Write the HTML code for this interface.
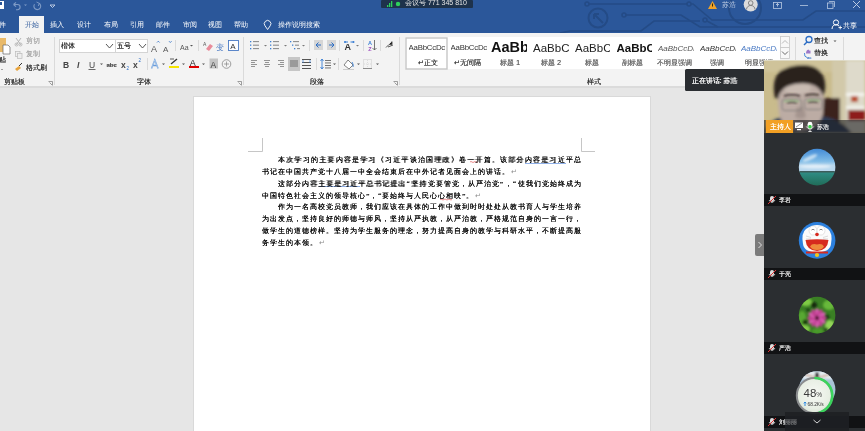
<!DOCTYPE html>
<html><head><meta charset="utf-8">
<style>
*{margin:0;padding:0;box-sizing:border-box}
html,body{width:865px;height:431px;overflow:hidden;background:#e6e6e6;will-change:transform;font-family:"Liberation Sans",sans-serif;position:relative}
.a{position:absolute}
svg{position:absolute;left:0;top:0}
#title{left:0;top:0;width:865px;height:33px;background:#2b579a}
#ribbon{left:0;top:33px;width:865px;height:55px;background:#f3f3f3;border-bottom:2px solid #dbdbdb}
#page{left:194px;top:97px;width:456px;height:334px;background:#fff;box-shadow:0 0 0 1px #d9d9d9}
.t{position:absolute;font-size:7px;line-height:8px;white-space:nowrap;text-shadow:0.25px 0 0 currentColor}
.ns{text-shadow:none!important}
.tab{position:absolute;top:20px;font-size:7px;color:#fff;line-height:9px;white-space:nowrap}
.lbl{position:absolute;font-size:7px;color:#333;line-height:8px;white-space:nowrap;text-shadow:0.25px 0 0 currentColor}
.sep{position:absolute;width:1px;background:#dadada}
#doc{left:262px;top:155px;width:319px;font-size:7px;line-height:11.86px;text-shadow:0.4px 0 0 rgba(0,0,0,.8),0 0.25px 0 rgba(0,0,0,.4);color:#000;font-family:"Liberation Serif",serif}
#doc div{white-space:nowrap;height:11.86px;text-align:justify;text-align-last:justify}
#doc div.l{text-align-last:left;letter-spacing:1px}
#doc .rt{color:#8a8a8a;text-shadow:none;padding-left:1px}
#doc q{quotes:none;display:inline-block;width:4px;overflow:visible;text-align:center;letter-spacing:0}
#panel{left:764px;top:133px;width:101px;height:298px;background:#2c2e32}
.bar{position:absolute;left:0;width:101px;height:12px;background:#131416}
.nm{position:absolute;left:15px;top:2px;font-size:7px;color:#eee;line-height:8px}
.av{position:absolute;left:34px;width:38px;height:38px;border-radius:50%;overflow:hidden}
</style></head><body>
<div id="title" class="a">
  <svg width="865" height="33" viewBox="0 0 865 33">
    <g fill="none" stroke="#244b86" stroke-width="1.6">
      <path d="M589,4 H687 M691,4 H693 L712,20 H803 L816,11 H865"/>
      <circle cx="587" cy="4" r="2"/><circle cx="689" cy="4" r="2"/>
      <circle cx="598" cy="18" r="9.5" stroke-width="2"/>
      <path d="M594,14 L603,23 M594,14 H599 M594,14 V19" stroke-width="2"/>
      <path d="M626,15 H681 L700,27 H865"/>
      <circle cx="624" cy="15" r="2"/>
      <path d="M560,33 L570,31 H641 L654,21 H700 M707,21 L718,27"/>
      <circle cx="705" cy="20" r="2"/>
      <circle cx="745" cy="8" r="16" stroke-width="2"/>
    </g>
    <!-- save icon -->
    <rect x="-3" y="1" width="7" height="8" fill="#fff"/>
    <rect x="-2" y="2" width="4" height="3" fill="#2b579a"/>
    <!-- undo -->
    <path d="M14,4.5 H17.5 A2.6,2.6 0 0 1 17.5,9.7 H16" fill="none" stroke="#7f9bc6" stroke-width="1.1"/>
    <path d="M13.5,4.5 L16,2.3 M13.5,4.5 L16,6.7" stroke="#7f9bc6" stroke-width="1.1" fill="none"/>
    <path d="M24,4.5 L27,4.5 L25.5,6 Z" fill="#7f9bc6"/>
    <path d="M39,3.3 A3.4,3.4 0 1 1 34.5,4.3" fill="none" stroke="#7f9bc6" stroke-width="1.1"/>
    <path d="M36.5,2 L39.3,3.3 L38.3,6" fill="none" stroke="#7f9bc6" stroke-width="0.9"/>
    <path d="M50,5 H55 L52.5,7.5 Z" fill="none" stroke="#c8d4e8" stroke-width="0.9"/>
    <!-- lightbulb -->
    <path d="M267.6,29.5 L265,25.8 A3.3,3.3 0 1 1 270.2,25.8 Z" fill="none" stroke="#fff" stroke-width="0.9" stroke-linejoin="round"/>
    <!-- meeting -->
    <rect x="381" y="0" width="92" height="8" rx="1" fill="#1b2530" opacity="0.75"/>
    <rect x="387" y="5" width="1.3" height="2" fill="#2ed05a"/>
    <rect x="389" y="3" width="1.3" height="4" fill="#2ed05a"/>
    <rect x="391" y="1" width="1.3" height="6" fill="#2ed05a"/>
    <circle cx="398" cy="4" r="2.2" fill="#2ed05a"/>
    <!-- warning -->
    <path d="M712.5,1 L717,9 H708 Z" fill="#f0a32a"/>
    <rect x="712" y="3.5" width="1" height="3" fill="#3a2a00"/>
    <!-- avatar -->
    <circle cx="750.7" cy="4.5" r="7" fill="#dcdcdc"/>
    <circle cx="750.7" cy="3" r="2.3" fill="none" stroke="#7a7a7a" stroke-width="0.9"/>
    <path d="M746.5,9.5 A4.2,4 0 0 1 755,9.5" fill="none" stroke="#7a7a7a" stroke-width="0.9"/>
    <!-- window controls -->
    <rect x="773.5" y="2.5" width="8" height="6" fill="none" stroke="#b9c9e2" stroke-width="0.8"/>
    <path d="M777.5,3.5 V6.5 M776,5 L777.5,3.5 L779,5" fill="none" stroke="#c9d6ea" stroke-width="0.8"/>
    <path d="M800,5.5 H808" stroke="#b9c9e2" stroke-width="0.8"/>
    <rect x="827.5" y="3" width="5.5" height="5.5" fill="none" stroke="#b9c9e2" stroke-width="0.8"/>
    <path d="M829,1.5 H834.5 V7" fill="none" stroke="#b9c9e2" stroke-width="0.8"/>
    <path d="M853,1 L860,8 M860,1 L853,8" stroke="#c9d6ea" stroke-width="0.9"/>
    <!-- share icon -->
    <circle cx="836" cy="22.5" r="2.6" fill="none" stroke="#fff" stroke-width="1"/>
    <path d="M832,29 A4,4 0 0 1 839,26" fill="none" stroke="#fff" stroke-width="1"/>
    <path d="M838.5,27.5 H842 M840.2,25.7 V29.3" stroke="#fff" stroke-width="0.9"/>
  </svg>
  <div class="a" style="left:19px;top:15.6px;width:25px;height:17.4px;background:#f3f3f3"></div>
  <div class="tab" style="left:-1px;">件</div>
  <div class="tab" style="left:24.5px;color:#2b579a">开始</div>
  <div class="tab" style="left:50px">插入</div>
  <div class="tab" style="left:77px">设计</div>
  <div class="tab" style="left:103.5px">布局</div>
  <div class="tab" style="left:130px">引用</div>
  <div class="tab" style="left:156px">邮件</div>
  <div class="tab" style="left:183px">审阅</div>
  <div class="tab" style="left:208px">视图</div>
  <div class="tab" style="left:234px">帮助</div>
  <div class="tab" style="left:278px">操作说明搜索</div>
  <div class="tab" style="left:405px;top:-2px;color:#e6e6e6">会议号 771 345 810</div>
  <div class="tab" style="left:722px;top:0px;color:#c6d2e6">苏浩</div>
  <div class="tab" style="left:843px;top:20.5px">共享</div>
</div>
<div id="ribbon" class="a"></div>
<div class="a" style="left:0;top:33px;width:865px;height:54px">
 <svg width="865" height="54" viewBox="0 33 865 54">
  <g fill="#dadada">
   <rect x="54" y="37" width="1" height="48"/><rect x="243" y="37" width="1" height="48"/>
   <rect x="399" y="37" width="1" height="48"/><rect x="795" y="37" width="1" height="48"/><rect x="843" y="37" width="1" height="48"/>
   <rect x="175" y="40" width="1" height="11"/><rect x="198" y="40" width="1" height="11"/>
   <rect x="147" y="58" width="1" height="12"/>
   <rect x="309" y="40" width="1" height="11"/><rect x="339" y="40" width="1" height="11"/>
   <rect x="363" y="40" width="1" height="11"/><rect x="380" y="40" width="1" height="11"/>
   <rect x="316" y="58" width="1" height="12"/><rect x="338" y="58" width="1" height="12"/>
  </g>
  <!-- clipboard: paste -->
  <rect x="-2" y="38" width="8" height="14" fill="#e8b969"/>
  <path d="M3,45 H8 L10,47 V54 H3 Z" fill="#fff" stroke="#666" stroke-width="0.7"/>
  <path d="M1,69 L3,69 L2,70 Z" fill="#555"/>
  <!-- cut -->
  <path d="M16,38 L21,45 M21,38 L16,45" stroke="#b0b0b0" stroke-width="0.9"/>
  <circle cx="16.5" cy="44.5" r="1.5" fill="none" stroke="#b0b0b0" stroke-width="0.8"/>
  <circle cx="20.5" cy="44.5" r="1.5" fill="none" stroke="#b0b0b0" stroke-width="0.8"/>
  <!-- copy -->
  <rect x="15.5" y="51.5" width="4.5" height="5" fill="#eee" stroke="#bbb" stroke-width="0.7"/>
  <rect x="17.5" y="53.5" width="4.5" height="5" fill="#eee" stroke="#bbb" stroke-width="0.7"/>
  <!-- format painter -->
  <path d="M15,69 L19,66 L21,68 L17,71 Z" fill="#e8a33b"/>
  <path d="M19,66 L22,63" stroke="#333" stroke-width="1"/>
  <!-- launchers -->
  <g fill="none" stroke="#777" stroke-width="0.7">
   <path d="M48.5,81.5 H52.5 V85.5 M49.5,82.5 L52,85"/>
   <path d="M237.5,81.5 H241.5 V85.5 M238.5,82.5 L241,85"/>
   <path d="M393.5,81.5 H397.5 V85.5 M394.5,82.5 L397,85"/>
  </g>
  <!-- font boxes -->
  <rect x="59.5" y="39.5" width="56" height="13" fill="#fff" stroke="#d4d4d4"/>
  <rect x="115.5" y="39.5" width="32" height="13" fill="#fff" stroke="#d4d4d4"/>
  <path d="M106,44 L109.5,48 L113,44" fill="none" stroke="#444" stroke-width="0.9"/>
  <path d="M139,44 L142.5,48 L146,44" fill="none" stroke="#444" stroke-width="0.9"/>
  <!-- grow/shrink -->
  <g fill="#555" font-size="8" font-family="Liberation Sans">
   <text x="151" y="51.5" font-size="9">A</text><text x="163" y="51.5" font-size="8">A</text>
   <text x="180" y="50" font-size="7">Aa</text>
  </g>
  <path d="M157,42.5 L158.3,41.2 L159.6,42.5" fill="none" stroke="#2b6cc4" stroke-width="0.8"/>
  <path d="M169,41.2 L170.3,42.5 L171.6,41.2" fill="none" stroke="#2b6cc4" stroke-width="0.8"/>
  <path d="M190,45 H193 L191.5,46.5 Z" fill="#555"/>
  <!-- clear format -->
  <text x="203" y="46" font-size="5" fill="#555" font-family="Liberation Sans">A</text>
  <path d="M206,49 L210,44 L213,46 L209,51 Z" fill="#e98b9a"/>
  <text x="216" y="50" font-size="8" fill="#4a7ac4" font-family="Liberation Serif">变</text>
  <rect x="228.5" y="40.5" width="10" height="10" fill="#fff" stroke="#4a7ac4" stroke-width="0.9"/>
  <text x="230.3" y="49" font-size="8" fill="#333" font-family="Liberation Sans">A</text>
  <!-- row2 font -->
  <g font-family="Liberation Sans" fill="#444">
   <text x="63" y="68" font-size="8.5" font-weight="bold">B</text>
   <text x="77" y="68" font-size="8.5" font-style="italic" font-weight="bold">I</text>
   <text x="89" y="67.5" font-size="8.5">U</text>
   <text x="106.5" y="67" font-size="6" font-weight="bold">abc</text>
   <text x="121" y="68" font-size="8.5" font-weight="bold">x</text>
   <text x="133" y="68" font-size="8.5" font-weight="bold">x</text>
  </g>
  <path d="M88.5,69.5 H95.5" stroke="#444" stroke-width="0.8"/>
  <path d="M106.5,65 H116.5" stroke="#444" stroke-width="0.6"/>
  <text x="126.5" y="69.5" font-size="4.5" fill="#2b6cc4" font-family="Liberation Sans">2</text>
  <text x="138.5" y="62" font-size="4.5" fill="#2b6cc4" font-family="Liberation Sans">2</text>
  <path d="M100,63.5 H103 L101.5,65 Z" fill="#555"/>
  <path d="M151.5,68.5 L154.8,60 L158.1,68.5 M152.8,65.5 H156.8" fill="none" stroke="#6a9ddb" stroke-width="1.4"/><path d="M151.5,68.5 L154.8,60 L158.1,68.5" fill="none" stroke="#e4eef9" stroke-width="0.45"/>
  <path d="M162,63.5 H165 L163.5,65 Z" fill="#555"/>
  <path d="M171,64 L177,59" stroke="#333" stroke-width="1.3"/>
  <path d="M170,59 H174" stroke="#333" stroke-width="0.8"/>
  <rect x="169" y="66" width="10" height="2" fill="#f5e400"/>
  <path d="M182,63.5 H185 L183.5,65 Z" fill="#555"/>
  <text x="189.8" y="65.5" font-size="9" fill="#222" font-family="Liberation Sans">A</text>
  <rect x="189" y="66" width="10" height="2" fill="#e00000"/>
  <path d="M202,63.5 H205 L203.5,65 Z" fill="#555"/>
  <rect x="209.5" y="58.5" width="8.5" height="10" fill="#c4c4c4"/>
  <text x="210.5" y="67.5" font-size="8.5" fill="#444" font-family="Liberation Sans">A</text>
  <circle cx="226.5" cy="64" r="4.3" fill="none" stroke="#888" stroke-width="0.8"/>
  <path d="M226.5,61.5 V66.5 M224,64 H229" stroke="#777" stroke-width="0.6"/>
  <!-- paragraph row1 -->
  <g fill="#3b7fd4">
   <rect x="250" y="41" width="1.3" height="1.3"/><rect x="250" y="44.5" width="1.3" height="1.3"/><rect x="250" y="48" width="1.3" height="1.3"/>
   <rect x="270" y="41" width="1.3" height="1.3"/><rect x="270" y="44.5" width="1.3" height="1.3"/><rect x="270" y="48" width="1.3" height="1.3"/>
   <rect x="290" y="41" width="1.3" height="1.3"/><rect x="292" y="44.5" width="1.3" height="1.3"/><rect x="294" y="48" width="1.3" height="1.3"/>
  </g>
  <g fill="#7a7a7a">
   <rect x="253" y="41.2" width="6" height="0.9"/><rect x="253" y="44.7" width="6" height="0.9"/><rect x="253" y="48.2" width="6" height="0.9"/>
   <rect x="273" y="41.2" width="6" height="0.9"/><rect x="273" y="44.7" width="6" height="0.9"/><rect x="273" y="48.2" width="6" height="0.9"/>
   <rect x="293" y="41.2" width="6" height="0.9"/><rect x="295" y="44.7" width="4" height="0.9"/><rect x="297" y="48.2" width="3" height="0.9"/>
   <path d="M264,45 H267 L265.5,46.5 Z"/><path d="M284,45 H287 L285.5,46.5 Z"/><path d="M302,45 H305 L303.5,46.5 Z"/>
   <path d="M356,45 H359 L357.5,46.5 Z"/>
  </g>
  <rect x="314" y="40" width="9" height="10" fill="#d6d6d6"/>
  <path d="M316,45 H321 M316,45 L318.5,42.5 M316,45 L318.5,47.5" stroke="#2b6cc4" stroke-width="1" fill="none"/>
  <rect x="327" y="40" width="9" height="10" fill="#d6d6d6"/>
  <path d="M329,45 H334 M334,45 L331.5,42.5 M334,45 L331.5,47.5" stroke="#2b6cc4" stroke-width="1" fill="none"/>
  <text x="344.5" y="50" font-size="9" fill="#333" font-weight="bold" font-family="Liberation Sans">A</text>
  <path d="M344.5,42 H348 M350.5,42 H354" stroke="#3b7fd4" stroke-width="1.1"/><circle cx="345" cy="42" r="1" fill="#3b7fd4"/><circle cx="353.5" cy="42" r="1" fill="#3b7fd4"/>
  <text x="368" y="45" font-size="5.5" fill="#3b7fd4" font-weight="bold" font-family="Liberation Sans">A</text>
  <text x="368.3" y="50.5" font-size="5.5" fill="#a050c0" font-weight="bold" font-family="Liberation Sans">Z</text>
  <path d="M374.5,40 V50 M372.5,48 L374.5,50 L376.5,48" stroke="#555" stroke-width="0.8" fill="none"/>
  <path d="M386,47.5 L389,44.5 M389,44.5 L392,44.5 L392,41.5 M388,47 L393,45" stroke="#555" stroke-width="1"/>
  <!-- paragraph row2 -->
  <g fill="#8a8a8a">
   <rect x="251" y="60" width="6" height="0.9"/><rect x="251" y="62" width="4" height="0.9"/><rect x="251" y="64" width="6" height="0.9"/><rect x="251" y="66" width="4" height="0.9"/>
   <rect x="264" y="60" width="6" height="0.9"/><rect x="265" y="62" width="4" height="0.9"/><rect x="264" y="64" width="6" height="0.9"/><rect x="265" y="66" width="4" height="0.9"/>
   <rect x="278" y="60" width="6" height="0.9"/><rect x="280" y="62" width="4" height="0.9"/><rect x="278" y="64" width="6" height="0.9"/><rect x="280" y="66" width="4" height="0.9"/>
  </g>
  <rect x="288" y="57" width="12" height="14" fill="#c6c6c6"/>
  <rect x="290" y="60" width="8" height="7" fill="#9a9a9a"/>
  <g fill="#555"><rect x="302" y="59" width="9" height="1"/><rect x="302" y="62" width="9" height="1"/><rect x="302" y="65" width="9" height="1"/><rect x="302" y="68" width="9" height="1"/></g>
  <path d="M303,60 V63 M310,60 V63" stroke="#3b7fd4" stroke-width="0.7"/>
  <path d="M322,59 V69 M320.5,61 L322,59 L323.5,61 M320.5,67 L322,69 L323.5,67" stroke="#3b7fd4" stroke-width="0.9" fill="none"/>
  <g fill="#666"><rect x="325" y="60" width="6" height="0.9"/><rect x="325" y="62.5" width="6" height="0.9"/><rect x="325" y="65" width="6" height="0.9"/><rect x="325" y="67.5" width="6" height="0.9"/></g>
  <path d="M333,63.5 H336 L334.5,65 Z" fill="#555"/>
  <path d="M344,65 L348,60 L353,65 L349,69 Z" fill="#fff" stroke="#666" stroke-width="0.8"/>
  <path d="M352,62 Q354,65 353,67" stroke="#3b7fd4" stroke-width="0.9" fill="none"/>
  <rect x="343" y="69" width="11" height="1" fill="#ccc"/>
  <path d="M357,63.5 H360 L358.5,65 Z" fill="#555"/>
  <rect x="363.5" y="59.5" width="8" height="9" fill="none" stroke="#bbb" stroke-width="0.7" stroke-dasharray="1 1"/><path d="M367.5,60 V68 M364,64 H371" stroke="#ccc" stroke-width="0.6" stroke-dasharray="1 1"/>
  <path d="M363,68.5 H372" stroke="#777" stroke-width="0.8"/>
  <path d="M376,63.5 H379 L377.5,65 Z" fill="#555"/>
  <!-- styles gallery -->
  <rect x="405" y="37" width="375" height="32" fill="#fff"/>
  <rect x="406" y="38" width="41" height="31" fill="none" stroke="#c6c6c6" stroke-width="1.4"/>
  <!-- gallery scroll -->
  <rect x="780.5" y="36.5" width="9" height="11" fill="#f8f8f8" stroke="#c8c8c8" stroke-width="0.8"/>
  <rect x="780.5" y="47.5" width="9" height="11" fill="#f8f8f8" stroke="#c8c8c8" stroke-width="0.8"/>
  <path d="M782,43.5 L785,40.5 L788,43.5" fill="none" stroke="#aaa" stroke-width="0.8"/>
  <path d="M782,51.5 L785,54.5 L788,51.5" fill="none" stroke="#444" stroke-width="0.8"/>
  <!-- find/replace -->
  <circle cx="809" cy="39.5" r="3" fill="none" stroke="#2b6cc4" stroke-width="1.3"/>
  <path d="M807,42 L804,45" stroke="#2b6cc4" stroke-width="1.5"/>
  <path d="M833.5,40.5 H836.5 L835,42 Z" fill="#555"/>
  <path d="M806,53.5 Q806,50 808.5,49.5 Q809,51 810.5,50.5 L810.5,53.5 Z" fill="#9b78c8"/>
  <path d="M804.5,53 Q804,57 807,57.5" stroke="#3b7fd4" stroke-width="0.9" fill="none"/>
  <text x="807" y="58.5" font-size="4" fill="#2b6cc4" font-family="Liberation Sans" font-weight="bold">ac</text>
 </svg>
</div>
<!-- ribbon text -->
<div class="t" style="left:-1px;top:56px;color:#333">贴</div>
<div class="t" style="left:26px;top:37px;color:#aaa">剪切</div>
<div class="t" style="left:26px;top:50px;color:#aaa">复制</div>
<div class="t" style="left:26px;top:63.5px;color:#333">格式刷</div>
<div class="lbl" style="left:3.5px;top:77.5px">剪贴板</div>
<div class="lbl" style="left:137px;top:77.5px">字体</div>
<div class="lbl" style="left:310px;top:77.5px">段落</div>
<div class="lbl" style="left:587px;top:77.5px">样式</div>
<div class="t" style="left:61px;top:42px;color:#333">楷体</div>
<div class="t" style="left:117px;top:42px;color:#333">五号</div>
<div class="t" style="left:814px;top:37px;color:#333">查找</div>
<div class="t" style="left:814px;top:49px;color:#333">替换</div>
<!-- style names -->
<div class="t ns" style="left:408.5px;top:43.5px;font-size:7.8px;color:#333;letter-spacing:-0.2px;width:37px;overflow:hidden">AaBbCcDc</div>
<div class="t ns" style="left:450.5px;top:43.5px;font-size:7.8px;color:#333;letter-spacing:-0.2px;width:37px;overflow:hidden">AaBbCcDc</div>
<div class="t ns" style="left:491px;top:39px;font-size:14.5px;line-height:17px;color:#111;font-weight:bold;width:36px;overflow:hidden">AaBb</div>
<div class="t ns" style="left:533px;top:40.5px;font-size:11.5px;line-height:14px;color:#222;width:36px;overflow:hidden">AaBbC</div>
<div class="t ns" style="left:575px;top:40.5px;font-size:11.5px;line-height:14px;color:#222;width:35px;overflow:hidden">AaBbC</div>
<div class="t ns" style="left:616.5px;top:40.5px;font-size:11.5px;line-height:14px;color:#111;font-weight:bold;width:35px;overflow:hidden">AaBbC</div>
<div class="t ns" style="left:658px;top:45px;font-size:8px;color:#555;font-style:italic;letter-spacing:0px;width:36px;overflow:hidden">AaBbCcDi</div>
<div class="t ns" style="left:700px;top:45px;font-size:8px;color:#333;font-style:italic;letter-spacing:0px;width:36px;overflow:hidden">AaBbCcDi</div>
<div class="t ns" style="left:741px;top:45px;font-size:8px;color:#4a7ac4;font-style:italic;letter-spacing:0px;width:36px;overflow:hidden">AaBbCcDi</div>
<div class="t" style="left:418px;top:59px;color:#444">↵正文</div>
<div class="t" style="left:454px;top:59px;color:#444">↵无间隔</div>
<div class="t" style="left:500px;top:59px;color:#666">标题 1</div>
<div class="t" style="left:541px;top:59px;color:#666">标题 2</div>
<div class="t" style="left:585px;top:59px;color:#666">标题</div>
<div class="t" style="left:622px;top:59px;color:#666">副标题</div>
<div class="t" style="left:657px;top:59px;color:#666">不明显强调</div>
<div class="t" style="left:710px;top:59px;color:#666">强调</div>
<div class="t" style="left:745px;top:59px;color:#666">明显强调</div>

<div id="page" class="a"></div>
<svg width="865" height="431" style="pointer-events:none">
  <path d="M248,151.5 H262.5 V138" fill="none" stroke="#b8b8b8" stroke-width="0.8"/>
  <path d="M595,151.5 H581.5 V138" fill="none" stroke="#b8b8b8" stroke-width="0.8"/>
  <path d="M525,163.5 H566 M319,186.5 H360" stroke="#8fb0e8" stroke-width="1"/>
  <path d="M470,162 q1,-1 2,0 t2,0 t2,0 t2,0 M440,199.5 q1,-1 2,0 t2,0 t2,0 t2,0 t2,0 t2,0" fill="none" stroke="#e04040" stroke-width="0.6"/>
</svg>
<div id="doc" class="a">
<div style="padding-left:16px">本次学习的主要内容是学习《习近平谈治国理政》卷一开篇。该部分内容是习近平总</div>
<div class="l">书记在中国共产党十八届一中全会结束后在中外记者见面会上的讲话。<span class="rt">↵</span></div>
<div style="padding-left:16px">这部分内容主要是习近平总书记提出<q>“</q>坚持党要管党，从严治党<q>”</q>，<q>“</q>使我们党始终成为</div>
<div class="l">中国特色社会主义的领导核心<q>”</q>，<q>“</q>要始终与人民心心相映<q>”</q>。<span class="rt">↵</span></div>
<div style="padding-left:16px">作为一名高校党员教师，我们应该在具体的工作中做到时时处处从教书育人与学生培养</div>
<div>为出发点，坚持良好的师德与师风，坚持从严执教，从严治教，严格规范自身的一言一行，</div>
<div>做学生的道德榜样。坚持为学生服务的理念，努力提高自身的教学与科研水平，不断提高服</div>
<div class="l">务学生的本领。<span class="rt">↵</span></div>
</div>
<div class="a" style="left:685px;top:69px;width:80px;height:21.5px;background:#2a2d31;border-radius:1.5px"></div>
<div class="t" style="left:691.5px;top:76.5px;color:#fff">正在讲话: 苏浩</div>
<svg width="865" height="431" viewBox="0 0 865 431">
 <defs>
  <filter id="bl" x="-20%" y="-20%" width="140%" height="140%"><feGaussianBlur stdDeviation="1.6"/></filter>
  <filter id="bl2" x="-20%" y="-20%" width="140%" height="140%"><feGaussianBlur stdDeviation="0.8"/></filter>
  <clipPath id="vc"><rect x="764" y="60" width="101" height="73"/></clipPath>
  <clipPath id="c1"><circle cx="817.1" cy="167.1" r="18.3"/></clipPath>
  <clipPath id="c3"><circle cx="817.1" cy="315.1" r="18.3"/></clipPath>
  <clipPath id="c4"><circle cx="817.1" cy="389.5" r="18.3"/></clipPath>
  <linearGradient id="sky" x1="0" y1="0" x2="0" y2="1">
   <stop offset="0" stop-color="#3f88d6"/><stop offset="0.55" stop-color="#7fbbe6"/><stop offset="0.72" stop-color="#b9d8ee"/>
  </linearGradient>
  <linearGradient id="sea" x1="0" y1="0" x2="0" y2="1">
   <stop offset="0" stop-color="#2f8c84"/><stop offset="1" stop-color="#1f6a55"/>
  </linearGradient>
  <radialGradient id="pg" cx="0.5" cy="0.45" r="0.6">
   <stop offset="0" stop-color="#f6f8f4"/><stop offset="0.7" stop-color="#e8efe4"/><stop offset="1" stop-color="#d5e0d0"/>
  </radialGradient>
 </defs>
 <!-- video -->
 <g clip-path="url(#vc)">
  <rect x="764" y="60" width="101" height="73" fill="#c9bb8c"/>
  <g filter="url(#bl)">
   <rect x="764" y="58" width="76" height="14" fill="#cfc39a"/>
   <rect x="832" y="60" width="33" height="73" fill="#d2c9aa"/>
   <rect x="846" y="60" width="19" height="73" fill="#dedacb"/>
   <rect x="821" y="98" width="19" height="24" fill="#3a241c"/>
   <rect x="846" y="93" width="19" height="3" fill="#f6f6f2"/>
   <rect x="851" y="96" width="7" height="6" fill="#b84a20"/>
   <rect x="846" y="106" width="19" height="3" fill="#f2f2ec"/>
   <rect x="848" y="110" width="17" height="11" fill="#8e1a1a"/>
   <path d="M764,133 Q768,119 786,116 L818,116 Q840,118 852,133 Z" fill="#2f3e58"/>
   <path d="M777,94 Q777,80 800,80 Q823,80 824,94 L823,114 Q819,130 801,131 Q783,130 779,114 Z" fill="#bcaca4"/>
   <ellipse cx="797" cy="88" rx="14" ry="6" fill="#c9bbb2"/>
   <path d="M775,98 Q771,80 780,71 Q792,64 805,65 Q820,66 824,78 Q827,88 823,96 Q820,86 810,84 Q798,82 788,86 Q779,90 778,99 Z" fill="#2a211d"/>
   <path d="M797,107 L795,117 Q801,120 806,117 L804,107 Z" fill="#a4948e"/>
   <ellipse cx="801" cy="123" rx="7" ry="2" fill="#8a7a74"/>
  </g>
  <g filter="url(#bl2)">
   <path d="M784,96 Q792,93.5 800,96 M805,95.5 Q812,93.5 819,95" stroke="#3a302c" stroke-width="1.6" fill="none"/>
   <path d="M787,103 Q792,101.5 797,103 M808,102.5 Q813,101 818,102.5" stroke="#4a3e3a" stroke-width="1.3" fill="none"/>
  </g>
  <g filter="url(#bl2)" opacity="0.95">
   <rect x="782" y="99" width="19.5" height="11.5" rx="3" fill="none" stroke="#7e7a78" stroke-width="0.9"/>
   <rect x="804.5" y="98.5" width="18" height="11" rx="3" fill="none" stroke="#7e7a78" stroke-width="0.9"/>
   <path d="M784,101.5 Q792,100 799,101.5 M807,101 Q813,99.5 820,101" stroke="#86c67a" stroke-width="1.1" fill="none"/>
  </g>
  <rect x="764" y="120" width="101" height="13" fill="#1c1e22" opacity="0.6"/>
  <rect x="765.8" y="120" width="27.3" height="13.3" fill="#f2a024"/>
  <rect x="795" y="122.5" width="8" height="5.5" fill="#fff"/>
  <rect x="797" y="129" width="4" height="1.2" fill="#fff"/>
  <path d="M796,127 L802,123" stroke="#444" stroke-width="0.6"/>
  <rect x="807.6" y="121.8" width="4.8" height="7" rx="2.4" fill="#fff"/>
  <rect x="808.4" y="125" width="3.2" height="3.4" rx="1.2" fill="#3ecf4a"/>
  <path d="M806.3,126.5 Q810,132 813.7,126.5 M810,130 V131.5 M808.3,131.5 H811.7" fill="none" stroke="#fff" stroke-width="0.8"/>
  <rect x="764" y="60" width="101" height="1" fill="#e8e8e0" opacity="0.6"/>
 </g>
 <!-- panel -->
 <rect x="764" y="133" width="101" height="298" fill="#2b2e31"/>
 <rect x="764" y="194" width="101" height="12" fill="#111214"/>
 <rect x="764" y="268" width="101" height="12" fill="#111214"/>
 <rect x="764" y="342" width="101" height="12" fill="#111214"/>
 <rect x="764" y="416" width="101" height="12" fill="#111214"/>
 <!-- avatar 1: sea -->
 <g clip-path="url(#c1)">
  <rect x="798" y="148" width="38" height="24" fill="url(#sky)"/>
  <g filter="url(#bl2)">
   <ellipse cx="810" cy="158" rx="8" ry="2" fill="#e6f1fa" opacity="0.7" transform="rotate(-25 810 158)"/>
   <ellipse cx="815" cy="166.5" rx="16" ry="1.8" fill="#eef5fb" opacity="0.8"/>
  </g>
  <rect x="798" y="171" width="38" height="2" fill="#3d5c5a"/>
  <rect x="798" y="172.5" width="38" height="14" fill="url(#sea)"/>
 </g>
 <!-- avatar 2: doraemon -->
 <circle cx="817.1" cy="240.4" r="18.3" fill="#2c80de"/>
 <path d="M803,244 Q801,233 806,229 Q812,225 817,225 Q822,225 828,229 Q833,233 831,244 Q830,252 817,252.5 Q804,252 803,244 Z" fill="#fbfbfb"/>
 <ellipse cx="813" cy="230.5" rx="4" ry="4.6" fill="#fff" stroke="#c8c8c8" stroke-width="0.5"/>
 <ellipse cx="821" cy="230.5" rx="4" ry="4.6" fill="#fff" stroke="#c8c8c8" stroke-width="0.5"/>
 <path d="M811.5,230 q1.5,-1.5 3,0 M819.5,230 q1.5,-1.5 3,0" stroke="#333" stroke-width="0.6" fill="none"/>
 <circle cx="817" cy="234.5" r="1.8" fill="#d8281e"/>
 <path d="M806,236 L811,237.5 M806,239 L811,239 M828,236 L823,237.5 M828,239 L823,239" stroke="#aaa" stroke-width="0.4"/>
 <path d="M805.5,240 Q817,238.5 828.5,240 Q827.5,250.5 817,251 Q806.5,250.5 805.5,240 Z" fill="#d62a1e"/>
 <path d="M810,246.5 Q812,243 817,244.5 Q822,243 824,246.5 Q822,250 817,250 Q812,250 810,246.5 Z" fill="#ee8a3c"/>
 <rect x="806" y="251.5" width="22" height="2" fill="#d62a1e"/>
 <circle cx="817" cy="255" r="2.1" fill="#f2c41a"/>
 <!-- avatar 3: flower -->
 <g clip-path="url(#c3)">
  <rect x="798" y="296" width="38" height="38" fill="#3a7f24"/>
  <g filter="url(#bl2)">
   <ellipse cx="806" cy="302" rx="6" ry="4" fill="#7fcb44"/>
   <ellipse cx="829" cy="305" rx="6" ry="5" fill="#68b83a"/>
   <ellipse cx="802" cy="318" rx="4" ry="7" fill="#58a830"/>
   <ellipse cx="804" cy="329" rx="6" ry="4" fill="#86cc4a"/>
   <ellipse cx="830" cy="326" rx="5" ry="6" fill="#92d458"/>
   <ellipse cx="818" cy="331" rx="6" ry="3" fill="#4a9a2a"/>
   <circle cx="814" cy="305" r="3" fill="#132a0c"/>
   <circle cx="827" cy="317" r="2.5" fill="#1c3e12"/>
   <circle cx="805" cy="322" r="2.5" fill="#1a3a10"/>
   <circle cx="808" cy="310" r="2" fill="#204416"/>
   <circle cx="826" cy="330" r="2.5" fill="#27501a"/>
  </g>
  <g filter="url(#bl2)"><ellipse cx="817" cy="313" rx="2" ry="4.8" fill="#d65aae" transform="rotate(0 817 318)"/><ellipse cx="817" cy="313" rx="2" ry="4.8" fill="#bf3f90" transform="rotate(30 817 318)"/><ellipse cx="817" cy="313" rx="2" ry="4.8" fill="#d65aae" transform="rotate(60 817 318)"/><ellipse cx="817" cy="313" rx="2" ry="4.8" fill="#bf3f90" transform="rotate(90 817 318)"/><ellipse cx="817" cy="313" rx="2" ry="4.8" fill="#d65aae" transform="rotate(120 817 318)"/><ellipse cx="817" cy="313" rx="2" ry="4.8" fill="#bf3f90" transform="rotate(150 817 318)"/><ellipse cx="817" cy="313" rx="2" ry="4.8" fill="#d65aae" transform="rotate(180 817 318)"/><ellipse cx="817" cy="313" rx="2" ry="4.8" fill="#bf3f90" transform="rotate(210 817 318)"/><ellipse cx="817" cy="313" rx="2" ry="4.8" fill="#d65aae" transform="rotate(240 817 318)"/><ellipse cx="817" cy="313" rx="2" ry="4.8" fill="#bf3f90" transform="rotate(270 817 318)"/><ellipse cx="817" cy="313" rx="2" ry="4.8" fill="#d65aae" transform="rotate(300 817 318)"/><ellipse cx="817" cy="313" rx="2" ry="4.8" fill="#bf3f90" transform="rotate(330 817 318)"/>
   <circle cx="817" cy="318" r="2.2" fill="#5a1a38"/>
  </g>
 </g>
 <!-- avatar 4 -->
 <g clip-path="url(#c4)">
  <rect x="798" y="371" width="38" height="38" fill="#a8c2d6"/>
  <g filter="url(#bl2)">
   <rect x="798" y="371" width="38" height="8" fill="#e6eef2"/>
   <path d="M803,374 L817,378 L831,374" stroke="#c89a80" stroke-width="1.5" fill="none"/>
   <ellipse cx="817" cy="375" rx="2" ry="3" fill="#222"/>
  </g>
 </g>
 <!-- progress -->
 <circle cx="814.4" cy="395.6" r="17.6" fill="url(#pg)" stroke="#8a8c8e" stroke-width="2"/>
 <path d="M814.4,378 A17.6,17.6 0 0 1 818.8,412.7" fill="none" stroke="#3bd35c" stroke-width="2.6"/>
 <text x="803.5" y="397" font-size="11.5" fill="#3a3a3a" font-family="Liberation Sans">48<tspan font-size="6.5">%</tspan></text>
 <path d="M805,406 V402 M803.7,403.3 L805,402 L806.3,403.3" stroke="#2e8ae0" stroke-width="1" fill="none"/>
 <text x="807.5" y="406" font-size="4.8" fill="#333" font-family="Liberation Sans">68.2K/s</text>
 <rect x="785" y="412" width="64" height="19" fill="#1e2023" opacity="0.9"/>
 <path d="M813.5,420 L817,423 L820.5,420" stroke="#e8e8e8" stroke-width="0.9" fill="none"/>
 <!-- mute icons -->
 <g id="mm">
  <rect x="770" y="196" width="4" height="6" rx="2" fill="#ddd"/>
  <path d="M769,200 Q772,205 775,200" stroke="#ddd" stroke-width="0.8" fill="none"/>
  <path d="M768,204 L776,196" stroke="#d33" stroke-width="1"/>
 </g>
 <g transform="translate(0 74)">
  <rect x="770" y="196" width="4" height="6" rx="2" fill="#ddd"/>
  <path d="M769,200 Q772,205 775,200" stroke="#ddd" stroke-width="0.8" fill="none"/>
  <path d="M768,204 L776,196" stroke="#d33" stroke-width="1"/>
 </g>
 <g transform="translate(0 148)">
  <rect x="770" y="196" width="4" height="6" rx="2" fill="#ddd"/>
  <path d="M769,200 Q772,205 775,200" stroke="#ddd" stroke-width="0.8" fill="none"/>
  <path d="M768,204 L776,196" stroke="#d33" stroke-width="1"/>
 </g>
 <g transform="translate(0 222)">
  <rect x="770" y="196" width="4" height="6" rx="2" fill="#ddd"/>
  <path d="M769,200 Q772,205 775,200" stroke="#ddd" stroke-width="0.8" fill="none"/>
  <path d="M768,204 L776,196" stroke="#d33" stroke-width="1"/>
 </g>

 <!-- collapse tab -->
 <path d="M764,234 V256 H757 Q755,256 755,254 V236 Q755,234 757,234 Z" fill="#7b7b7b"/>
 <path d="M758.5,242 L761.5,245 L758.5,248" stroke="#e8e8e8" stroke-width="0.9" fill="none"/>
</svg>
<div class="t" style="left:769.5px;top:122.5px;color:#fff">主持人</div>
<div class="t" style="left:817px;top:122.5px;color:#eee;font-size:6px">苏浩</div>
<div class="t" style="left:779px;top:196px;color:#eee;font-size:6px">李岩</div>
<div class="t" style="left:779px;top:270px;color:#eee;font-size:6px">于亮</div>
<div class="t" style="left:779px;top:344px;color:#eee;font-size:6px">严浩</div>
<div class="t" style="left:779px;top:418px;color:#eee;font-size:6px">刘<span style="opacity:.4">丽丽</span></div>
</body></html>
